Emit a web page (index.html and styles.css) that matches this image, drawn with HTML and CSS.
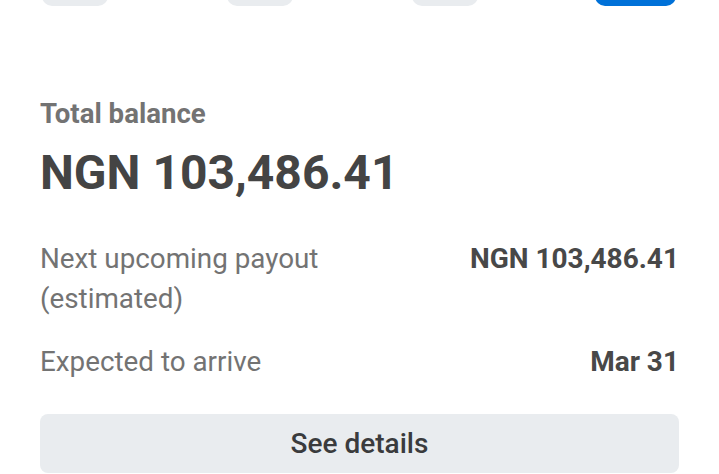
FILE: index.html
```html
<!DOCTYPE html>
<html lang="en">
<head>
    <meta charset="UTF-8">
    <meta name="viewport" content="width=device-width, initial-scale=1.0">
    <title>Balance</title>
    <link rel="stylesheet" href="styles.css">
</head>
<body>
    <div class="balance-card">
        <!-- Нижние края столбцов графика -->
        <div class="chart-bars">
            <div class="bar"></div>
            <div class="bar"></div>
            <div class="bar"></div>
            <div class="bar active"></div>
        </div>

        <h2 class="balance-label">Total balance</h2>
        <div class="balance-amount">NGN 103,486.41</div>

        <div class="payout-row">
            <span class="payout-label">Next upcoming payout<br>(estimated)</span>
            <span class="payout-value">NGN 103,486.41</span>
        </div>
        <div class="payout-row arrive">
            <span class="payout-label">Expected to arrive</span>
            <span class="payout-value">Mar 31</span>
        </div>

        <button class="details-btn">See details</button>
    </div>
</body>
</html>
```

FILE: styles.css
```css
* {
    margin: 0;
    padding: 0;
    box-sizing: border-box;
}

body {
    font-family: 'Roboto', 'Liberation Sans', sans-serif;
    background: #ffffff;
    color: #444444;
    overflow: hidden;
}

.balance-card {
    padding: 0 40px;
}

.chart-bars {
    display: flex;
    align-items: flex-end;
    height: 6px;
    overflow: hidden;
}

.bar {
    width: 66px;
    height: 40px;
    margin-left: 2px;
    flex-shrink: 0;
    background: #e9ecef;
    border-radius: 10px;
}

.bar:nth-child(2) { margin-left: 119px; }
.bar:nth-child(3) { margin-left: 119px; }

.bar.active {
    width: 81px;
    margin-left: 117px;
    background: #0071d8;
}

.balance-label {
    margin-top: 92px;
    font-size: 27.6px;
    line-height: 32px;
    font-weight: 700;
    color: #737373;
}

.balance-amount {
    margin-top: 15px;
    font-size: 48px;
    line-height: 56px;
    font-weight: 700;
    color: #444444;
}

.payout-row {
    display: flex;
    justify-content: space-between;
    align-items: flex-start;
    margin-top: 38px;
    line-height: 40px;
}

.payout-row.arrive {
    margin-top: 23px;
}

.payout-label {
    font-size: 27.8px;
    color: #737373;
}

.payout-value {
    font-size: 28px;
    font-weight: 700;
    color: #484848;
    text-align: right;
}

.details-btn {
    display: block;
    width: 100%;
    height: 59px;
    margin-top: 32px;
    background: #e9ecef;
    border: none;
    border-radius: 8px;
    font-family: inherit;
    font-size: 28px;
    font-weight: 500;
    color: #3a3b3d;
    cursor: pointer;
}
```
